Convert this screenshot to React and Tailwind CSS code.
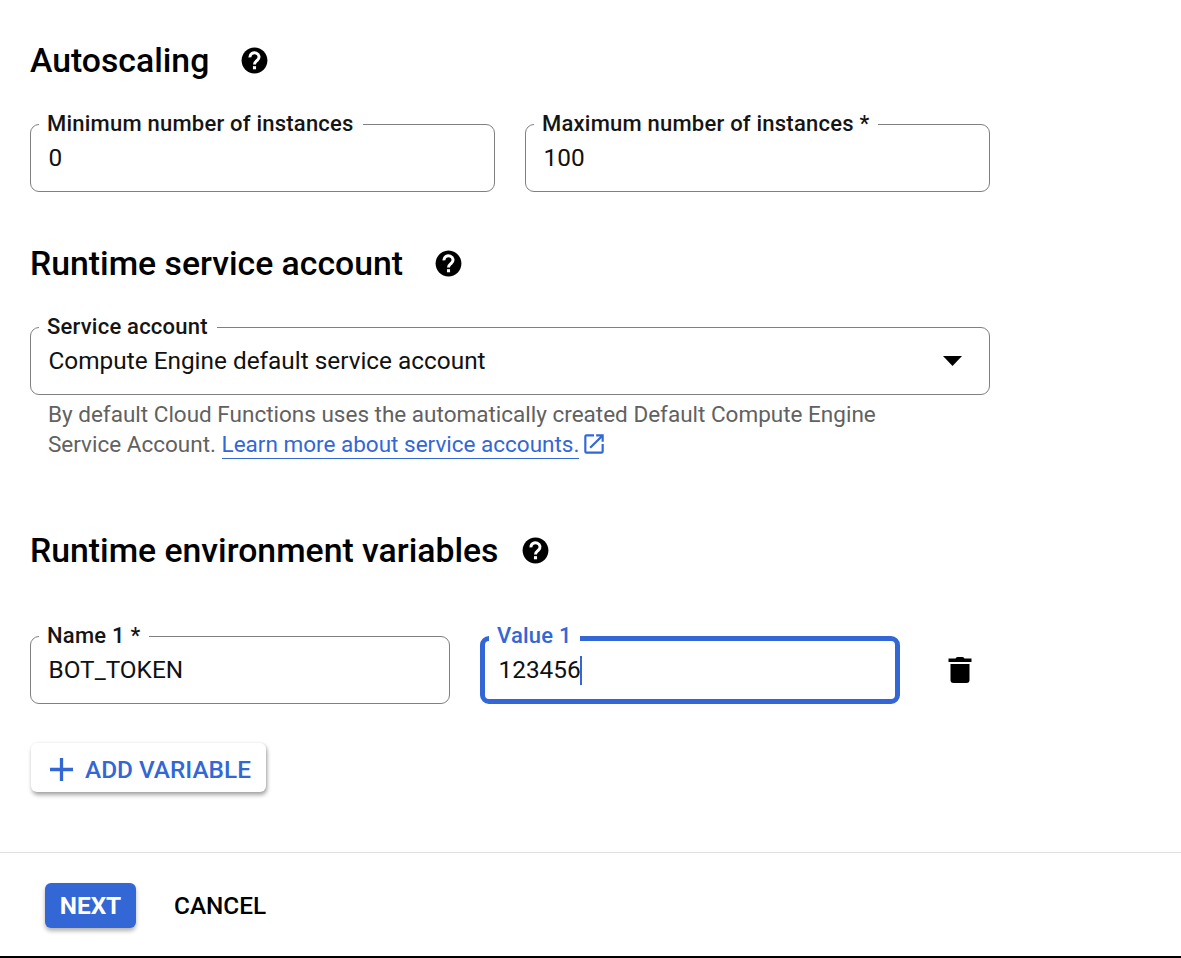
function HelpIcon() {
  return (
    <svg className="-mt-px size-[31px] shrink-0" viewBox="0 0 24 24" fill="#000" aria-hidden="true">
      <path d="M12 2C6.48 2 2 6.48 2 12s4.48 10 10 10 10-4.48 10-10S17.52 2 12 2z" />
      <path d="M8.500 9.500a3.500 3.300 0 1 1 5.700 2.300c-1.300 1.100-2.200 1.500-2.200 3.200" fill="none" stroke="#fff" strokeWidth="2.300" />
      <rect x="10.800" y="16.400" width="2.400" height="2.400" fill="#fff" />
    </svg>
  );
}

function SectionHeading({ children, gap }) {
  return (
    <div className={`flex h-10 items-center ${gap}`}>
      <h2 className="text-[33.75px] leading-10 font-medium whitespace-nowrap text-black">{children}</h2>
      <HelpIcon />
    </div>
  );
}

function Field({ label, focused = false, className, children }) {
  return (
    <fieldset
      className={`h-20 min-w-0 rounded-[9px] ${focused ? "border-[5px] border-[#3367d6] pl-1" : "border border-[#808080] pl-2"} ${className}`}
    >
      <legend
        className={`pl-2 text-[22px] leading-6 font-medium tracking-[0.22px] whitespace-nowrap ${focused ? "h-[29px] pr-2 text-[#3367d6]" : "h-6 pr-[9px] text-[#151515]"}`}
      >
        {label}
      </legend>
      <div
        className={`flex h-9 items-center pl-[9.500px] text-[24.375px] leading-9 text-[#111] ${focused ? "-mt-px" : "mt-1"}`}
      >
        {children}
      </div>
    </fieldset>
  );
}

export default function App() {
  return (
    <div className="flex h-[958px] w-full flex-col overflow-hidden border-b-2 border-black bg-white font-[Roboto,sans-serif]">
      <main className="flex h-[852px] w-[990px] shrink-0 flex-col items-start pt-[41px] pl-[30px]">
        <SectionHeading gap="gap-[30px]">Autoscaling</SectionHeading>
        <div className="mt-[31px] flex w-full gap-[30px]">
          <Field label="Minimum number of instances" className="flex-1">0</Field>
          <Field label="Maximum number of instances *" className="flex-1">100</Field>
        </div>

        <div className="mt-[52px]">
          <SectionHeading gap="gap-[30px]">Runtime service account</SectionHeading>
        </div>
        <Field label="Service account" className="mt-[31px] w-full">
          <span>Compute Engine default service account</span>
          <svg className="mr-[27px] ml-auto h-[10px] w-[19px]" viewBox="0 0 19 10" aria-hidden="true">
            <path d="M0 0h19L9.500 10z" />
          </svg>
        </Field>
        <p className="mt-1 w-[900px] pl-[18px] text-[22.5px] leading-[30px] text-[#616161]">
          By default Cloud Functions uses the automatically created Default Compute Engine
          <br />
          Service Account.{" "}
          <a className="border-b border-[#3367d6] pb-px text-[#3367d6]">Learn more about service accounts.</a>
          <svg className="ml-[2px] inline-block size-[26px] align-[-5px]" viewBox="0 0 24 24" fill="#3367d6" aria-hidden="true">
            <path d="M19 19H5V5h7V3H5a2 2 0 0 0-2 2v14a2 2 0 0 0 2 2h14c1.100 0 2-.900 2-2v-7h-2v7zM14 3v2h3.590l-9.830 9.830 1.410 1.410L19 6.410V10h2V3h-7z" />
          </svg>
        </p>

        <div className="mt-[72px]">
          <SectionHeading gap="gap-[22px]">Runtime environment variables</SectionHeading>
        </div>
        <div className="mt-[53px] flex w-full">
          <Field label="Name 1 *" className="w-[420px]">
            <span>BOT_TOKEN</span>
          </Field>
          <Field label="Value 1" focused className="ml-[30px] w-[420px]">
            <span>123456</span>
            <span className="-ml-px h-[29px] w-[2px] bg-[#3367d6]" />
          </Field>
          <svg className="mt-[33px] ml-[48px] h-[26px] w-[24px]" viewBox="0 0 23 26" aria-hidden="true">
            <path d="M7 1.500Q7.500 0 9 0h5q1.500 0 2 1.500h7V5H0V1.500zM2 7h19v16q0 3-3 3H5q-3 0-3-3z" />
          </svg>
        </div>

        <button className="mt-[39px] ml-px flex h-[49px] w-[235px] items-center rounded-md bg-white pt-[5px] pl-[19px] text-[24.375px] font-medium text-[#3367d6] shadow-[1px_3px_4px_rgba(0,0,0,0.35),1px_0_3px_rgba(0,0,0,0.08)]">
          <svg className="-mt-px mr-3 size-[23px]" viewBox="0 0 23 23" fill="none" stroke="#3367d6" strokeWidth="3.300" aria-hidden="true">
            <path d="M11.500 0v23M0 11.500h23" />
          </svg>
          <span className="whitespace-nowrap">ADD VARIABLE</span>
        </button>
      </main>

      <footer className="flex flex-1 items-start border-t border-[#e0e0e0] pt-[30px] pl-[45px] text-[24.375px] font-medium">
        <button className="h-[45px] w-[91px] rounded-md bg-[#3367d6] pt-[2px] font-bold text-white shadow-[0_3px_4px_rgba(0,0,0,0.3)]">NEXT</button>
        <button className="ml-[38px] h-[45px] pt-[2px] text-black">CANCEL</button>
      </footer>
    </div>
  );
}
